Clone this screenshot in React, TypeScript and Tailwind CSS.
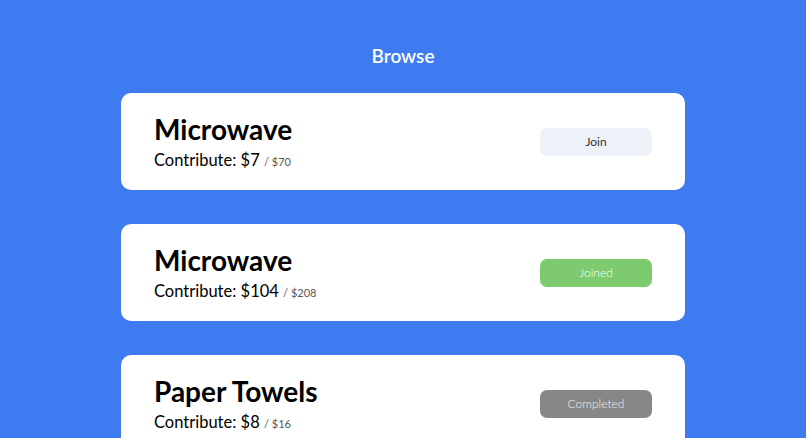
import React from "react";

type Status = "join" | "joined" | "completed";

interface Item {
  name: string;
  contribute: number;
  total: number;
  status: Status;
}

const items: Item[] = [
  { name: "Microwave", contribute: 7, total: 70, status: "join" },
  { name: "Microwave", contribute: 104, total: 208, status: "joined" },
  { name: "Paper Towels", contribute: 8, total: 16, status: "completed" },
];

const StatusButton: React.FC<{ status: Status }> = ({ status }) => {
  if (status === "joined") {
    return (
      <button className="w-[112px] h-[28px] rounded-[7px] bg-[#7dcb6e] text-white text-[12px] font-light">
        Joined
      </button>
    );
  }
  if (status === "completed") {
    return (
      <button className="w-[112px] h-[28px] rounded-[7px] bg-[#878787] text-[#f0f0f0] text-[12px] font-light">
        Completed
      </button>
    );
  }
  return (
    <button className="w-[112px] h-[28px] rounded-[7px] bg-[#edf2f8] text-[#333] text-[12px]">
      Join
    </button>
  );
};

export default function App() {
  return (
    <div
      className="w-full h-[438px] overflow-hidden bg-[#3e7bf1] flex flex-col items-center"
      style={{ fontFamily: "Lato, 'Open Sans', sans-serif" }}
    >
      <h1 className="pt-[44px] text-[19px] font-semibold text-white leading-[24px]">
        Browse
      </h1>

      <div className="mt-[25px] flex flex-col gap-[34px] w-[564px]">
        {items.map((item, i) => (
          <div
            key={i}
            className="h-[97px] bg-white rounded-[10px] flex items-center justify-between pl-[33px] pr-[33px] shrink-0"
          >
            <div className="flex flex-col pt-[2px]">
              <h2 className="text-[28px] font-bold text-black leading-[32px]">
                {item.name}
              </h2>
              <p className="mt-[4px] text-[16.5px] text-black leading-[22px]">
                Contribute: ${item.contribute}{" "}
                <span className="text-[11px] text-[#555]">/ ${item.total}</span>
              </p>
            </div>
            <StatusButton status={item.status} />
          </div>
        ))}
      </div>
    </div>
  );
}
